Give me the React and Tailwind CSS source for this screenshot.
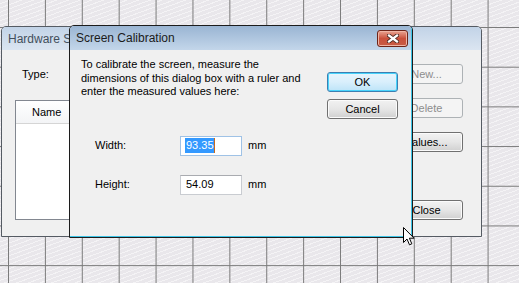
import React from 'react'

function WinButton({ children, disabled, isDefault, className = '' }) {
    if (disabled) {
        return (
            <div className={`h-[20px] flex items-center justify-center rounded-[3px] border border-[#adb2b5] bg-[#f4f4f4] text-[#8d8d8d] ${className}`}>
                {children}
            </div>
        )
    }
    if (isDefault) {
        return (
            <div className={`h-[20px] flex items-center justify-center rounded-[3px] border border-[#3c7fb1] bg-gradient-to-b from-[#e8f5fc] via-[#d9effc] to-[#bde4f8] shadow-[inset_0_0_0_1px_#48d3fb] ${className}`}>
                {children}
            </div>
        )
    }
    return (
        <div className={`h-[20px] flex items-center justify-center rounded-[3px] border border-[#707070] bg-gradient-to-b from-[#f2f2f2] via-[#e6e6e6] to-[#d0d0d0] shadow-[inset_0_0_0_1px_#fbfbfb] ${className}`}>
            {children}
        </div>
    )
}

function HardwareWindow() {
    return (
        <div className="absolute left-[1px] top-[26px] w-[481px] h-[211px] flex flex-col rounded-t-[5px] border border-[#555b63] bg-[#f0f0f0] overflow-hidden">
            {/* title bar, inactive; the dialog covers the rest of the caption */}
            <div className="h-[23px] shrink-0 flex items-center pl-[6px] bg-gradient-to-b from-[#c2d3e7] to-[#dbe5f1] text-[12px] text-[#434f5c]">
                <span className="w-[61px] overflow-hidden whitespace-nowrap">Hardware Setup</span>
            </div>
            <div className="flex-1 flex pl-[13px] pr-[18px] pt-[14px] pb-[16px] bg-[#f0f0f0]">
                <div className="flex-1 flex flex-col">
                    <div className="h-[20px] flex items-center pl-[7px]">Type:</div>
                    <div className="mt-[16px] flex-1 w-[250px] border border-[#828790] bg-white flex flex-col">
                        <div className="h-[23px] flex items-center pl-[16px] border-b border-[#d5d5d5] bg-gradient-to-b from-white to-[#f3f4f6]">Name</div>
                    </div>
                </div>
                <div className="w-[73px] flex flex-col">
                    <WinButton disabled>New...</WinButton>
                    <WinButton disabled className="mt-[14px]">Delete</WinButton>
                    <WinButton className="mt-[14px]">Values...</WinButton>
                    <div className="flex-1" />
                    <WinButton>Close</WinButton>
                </div>
            </div>
        </div>
    )
}

function CloseX() {
    return (
        <div className="w-[31px] h-[17px] rounded-[3px] border border-[#6d2418] bg-gradient-to-b from-[#e8a493] via-[#c9503b] to-[#c85b44] shadow-[inset_0_0_0_1px_#efb4a4] flex items-center justify-center">
            <svg width="12" height="9" viewBox="0 0 12 9">
                <path d="M2 1.5 L10 7.5 M10 1.5 L2 7.5" stroke="#4b2a24" strokeWidth="4" strokeLinecap="square" />
                <path d="M2 1.5 L10 7.5 M10 1.5 L2 7.5" stroke="#ffffff" strokeWidth="2.2" strokeLinecap="square" />
            </svg>
        </div>
    )
}

function CalibrationDialog() {
    return (
        <div className="absolute left-[69px] top-[25px] w-[344px] h-[213px] flex flex-col rounded-t-[5px] border border-[#1c1c1c] bg-[#f0f0f0] overflow-hidden">
            <div className="h-[24px] shrink-0 flex items-center justify-between pl-[6px] pr-[3px] bg-gradient-to-b from-[#9ab5d3] to-[#c3d6ea] border-r border-[#3cc4e6]">
                <span className="text-[12px] text-[#1b1b1b]">Screen Calibration</span>
                <CloseX />
            </div>
            <div className="flex-1 flex pl-[11px] pt-[8px] border-r border-b border-[#3cc4e6]">
                <div className="flex-1 flex flex-col">
                    <div className="leading-[13.5px] whitespace-nowrap">
                        To calibrate the screen, measure the<br />
                        dimensions of this dialog box with a ruler and<br />
                        enter the measured values here:
                    </div>
                    <div className="mt-[37px] flex items-center pl-[14px]">
                        <span className="w-[85px]">Width:</span>
                        <div className="w-[62px] h-[20px] border border-[#9fc2e6] bg-white flex items-center pl-[4px]">
                            <span className="bg-[#3399ff] text-white leading-[15px] pl-[1px]">93.35</span>
                            <span className="w-[1px] h-[15px] bg-[#c86a1c]" />
                        </div>
                        <span className="ml-[6px]">mm</span>
                    </div>
                    <div className="mt-[19px] flex items-center pl-[14px]">
                        <span className="w-[85px]">Height:</span>
                        <div className="w-[62px] h-[20px] border border-[#c9ccd1] border-t-[#a9abb0] bg-white flex items-center pl-[5px]">
                            54.09
                        </div>
                        <span className="ml-[6px]">mm</span>
                    </div>
                </div>
                <div className="w-[71px] mr-[13px] pt-[14px] flex flex-col">
                    <WinButton isDefault>OK</WinButton>
                    <WinButton className="mt-[7px]">Cancel</WinButton>
                </div>
            </div>
        </div>
    )
}

function Cursor() {
    return (
        <svg className="absolute left-[403px] top-[227px]" width="13" height="20" viewBox="0 0 13 20">
            <path d="M0.5 0.5 L0.5 15.5 L4 12 L6.5 17.8 L8.8 16.8 L6.4 11.2 L11 11.2 Z" fill="#ffffff" stroke="#000000" strokeWidth="1" strokeLinejoin="miter" />
        </svg>
    )
}

export default function App() {
    return (
        <div className="relative w-[519px] h-[283px] overflow-hidden bg-[#e9e7eb] font-['Liberation_Sans',Arial,sans-serif] text-[11px] text-black">
            {/* paper texture + grid */}
            <div className="absolute inset-0 bg-[repeating-linear-gradient(160deg,transparent_0px,transparent_3px,#f4f3f5_3px,#f4f3f5_4px)]" />
            <div className="absolute inset-0 bg-[linear-gradient(to_right,#7b7b7b_1px,transparent_1px),linear-gradient(to_bottom,#7b7b7b_1px,transparent_1px)] bg-[size:36.9px_39.7px] bg-[position:8px_27px]" />
            <HardwareWindow />
            <CalibrationDialog />
            <Cursor />
        </div>
    )
}
